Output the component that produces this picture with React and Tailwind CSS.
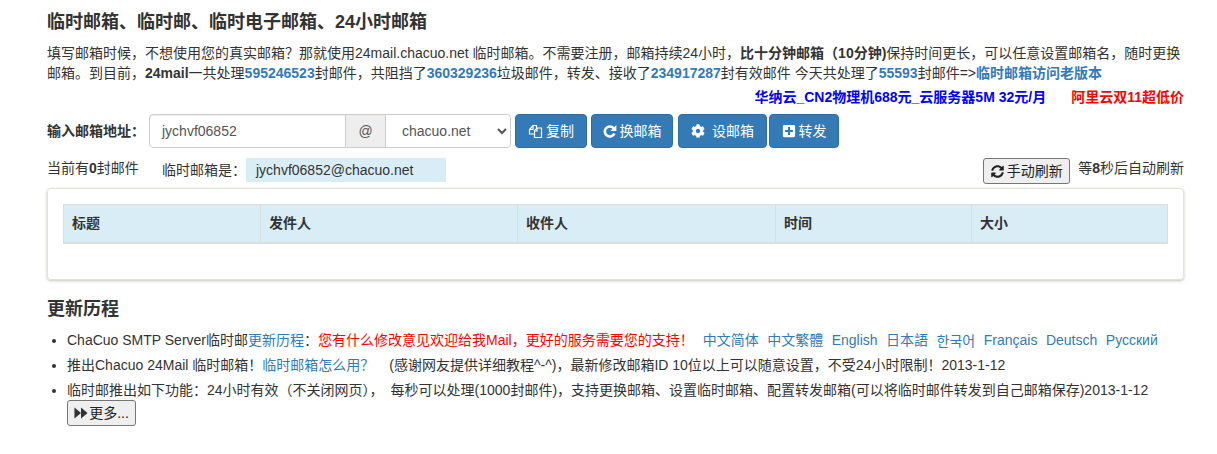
import React from "react";
import { FaCog, FaPlusSquare, FaSyncAlt } from "react-icons/fa";

const Copy = () => (
  <svg width="15" height="15" viewBox="0 0 15 15" fill="none" stroke="currentColor" strokeWidth="1.2" className="shrink-0">
    <path d="M6 10H1.5V5.5L5 1.5H8.5V4" />
    <path d="M5 1.5V5.5H1.5" />
    <path d="M6.5 13.5V6.5L9 4h4.5v9.5z" />
    <path d="M9 4v3H6.5" />
  </svg>
);

const Redo = () => (
  <svg width="14" height="14" viewBox="0 0 14 14" fill="none" className="shrink-0">
    <path d="M10.6 4.2A5 5 0 1 0 11.4 9.5" stroke="currentColor" strokeWidth="2.6" />
    <path d="M13.4 1v6h-6z" fill="currentColor" />
  </svg>
);

const Forward = () => (
  <svg width="14" height="12" viewBox="0 0 15 12" fill="#333" className="shrink-0">
    <path d="M0.5 0l7 6-7 6z" />
    <path d="M7.5 0l7 6-7 6z" />
  </svg>
);

const Btn = ({ w, ml, children }) => (
  <button className={`h-[34px] flex items-center justify-center gap-[3px] rounded-[4px] border border-[#2e6da4] bg-[#337ab7] text-white text-[14px] ${w} ${ml}`}>
    {children}
  </button>
);

const A = ({ children, className = "" }) => <a className={`text-[#337ab7] ${className}`}>{children}</a>;
const N = ({ children }) => <b className="text-[#337ab7] font-bold">{children}</b>;

export default function App() {
  return (
    <div className="w-[1217px] h-[454px] overflow-hidden bg-white pl-[47px] pr-[33px] text-[#333] text-[14px] leading-[20px] font-['Liberation_Sans','Noto_Sans_CJK_SC',sans-serif]">
      <h3 className="pt-[12px] text-[18px] leading-[20px] font-bold">临时邮箱、临时邮、临时电子邮箱、24小时邮箱</h3>
      <p className="mt-[11px]">
        填写邮箱时候，不想使用您的真实邮箱？那就使用24mail.chacuo.net 临时邮箱。不需要注册，邮箱持续24小时，<b>比十分钟邮箱（10分钟)</b>保持时间更长，可以任意设置邮箱名，随时更换邮箱。到目前，<b>24mail</b>一共处理<N>595246523</N>封邮件，共阻挡了<N>360329236</N>垃圾邮件，转发、接收了<N>234917287</N>封有效邮件 今天共处理了<N>55593</N>封邮件=&gt;<N>临时邮箱访问老版本</N>
      </p>
      <div className="mt-[4px] flex justify-end gap-[25px] font-bold">
        <a className="text-[#0000ff]">华纳云_CN2物理机688元_云服务器5M 32元/月</a>
        <a className="text-[#ff0000]">阿里云双11超低价</a>
      </div>
      <div className="mt-[7px] flex items-center">
        <label className="w-[102px] font-bold">输入邮箱地址：</label>
        <div className="flex h-[34px] w-[362px] rounded-[4px] border border-[#ccc]">
          <div className="w-[195px] pl-[12px] flex items-center text-[#555] rounded-l-[4px] shadow-[inset_0_1px_1px_rgba(0,0,0,0.075)]">jychvf06852</div>
          <div className="w-[41px] flex items-center justify-center bg-[#eee] border-x border-[#ccc] text-[#555]">@</div>
          <select defaultValue="chacuo.net" className="flex-1 pl-[12px] text-[#555] bg-white rounded-r-[4px] outline-none">
            <option>chacuo.net</option>
          </select>
        </div>
        <Btn w="w-[72px]" ml="ml-[4px]"><Copy />复制</Btn>
        <Btn w="w-[82px]" ml="ml-[4px]"><Redo />换邮箱</Btn>
        <Btn w="w-[89px]" ml="ml-[5px]"><FaCog className="text-[14px] mr-[4px]" />设邮箱</Btn>
        <Btn w="w-[70px]" ml="ml-[2px]"><FaPlusSquare className="text-[14px]" />转发</Btn>
      </div>
      <div className="mt-[10px] flex h-[26px] items-start">
        <span className="w-[115px]">当前有<b>0</b>封邮件</span>
        <span className="w-[84px] pt-[2px]">临时邮箱是：</span>
        <span className="w-[200px] h-[24px] pl-[10px] flex items-center bg-[#d9edf7]">jychvf06852@chacuo.net</span>
        <button className="ml-auto h-[26px] w-[87px] flex items-center justify-center gap-[3px] rounded-[3px] border border-[#767676] bg-[#efefef] text-[#222] text-[14px]">
          <FaSyncAlt className="text-[13px]" />手动刷新
        </button>
        <span className="ml-[8px]">等<b>8</b>秒后自动刷新</span>
      </div>
      <div className="mt-[4px] h-[92px] rounded-[4px] border border-[#e0e4d8] shadow-[0_1px_3px_rgba(80,90,60,0.35)] pt-[15px] px-[15px]">
        <table className="w-[1105px] table-fixed border-collapse">
          <thead>
            <tr className="h-[38px] bg-[#d9edf7] text-left">
              <th className="w-[197px] border border-b-2 border-[#ddd] px-[8px] font-bold">标题</th>
              <th className="w-[257px] border border-b-2 border-[#ddd] px-[8px] font-bold">发件人</th>
              <th className="w-[258px] border border-b-2 border-[#ddd] px-[8px] font-bold">收件人</th>
              <th className="w-[196px] border border-b-2 border-[#ddd] px-[8px] font-bold">时间</th>
              <th className="border border-b-2 border-[#ddd] px-[8px] font-bold">大小</th>
            </tr>
          </thead>
        </table>
      </div>
      <h3 className="mt-[19px] text-[18px] leading-[20px] font-bold">更新历程</h3>
      <ul className="mt-[11px] list-disc pl-[20px]">
        <li className="h-[25px]">
          ChaCuo SMTP Server临时邮<A>更新历程</A>：<span className="text-[#ff0000]">您有什么修改意见欢迎给我Mail，更好的服务需要您的支持！</span>
          <span className="ml-[9px] inline-flex gap-[8.5px]">
            <A>中文简体</A><A>中文繁體</A><A>English</A><A>日本語</A><A className="font-['Noto_Sans_CJK_KR',sans-serif]">한국어</A><A>Français</A><A>Deutsch</A><A>Русский</A>
          </span>
        </li>
        <li className="h-[25px]">
          推出Chacuo 24Mail 临时邮箱！<A>临时邮箱怎么用？</A><span className="ml-[15px]">(感谢网友提供详细教程^-^)，最新修改邮箱ID 10位以上可以随意设置，不受24小时限制！2013-1-12</span>
        </li>
        <li>
          临时邮推出如下功能：24小时有效（不关闭网页），<span className="ml-[7px]">每秒可以处理(1000封邮件)，支持更换邮箱、设置临时邮箱、配置转发邮箱(可以将临时邮件转发到自己邮箱保存)2013-1-12</span>
          <button className="flex h-[26px] w-[69px] items-center justify-center gap-[1px] rounded-[3px] border border-[#767676] bg-[#efefef] text-[#222] text-[14px]">
            <Forward />更多...
          </button>
        </li>
      </ul>
    </div>
  );
}
